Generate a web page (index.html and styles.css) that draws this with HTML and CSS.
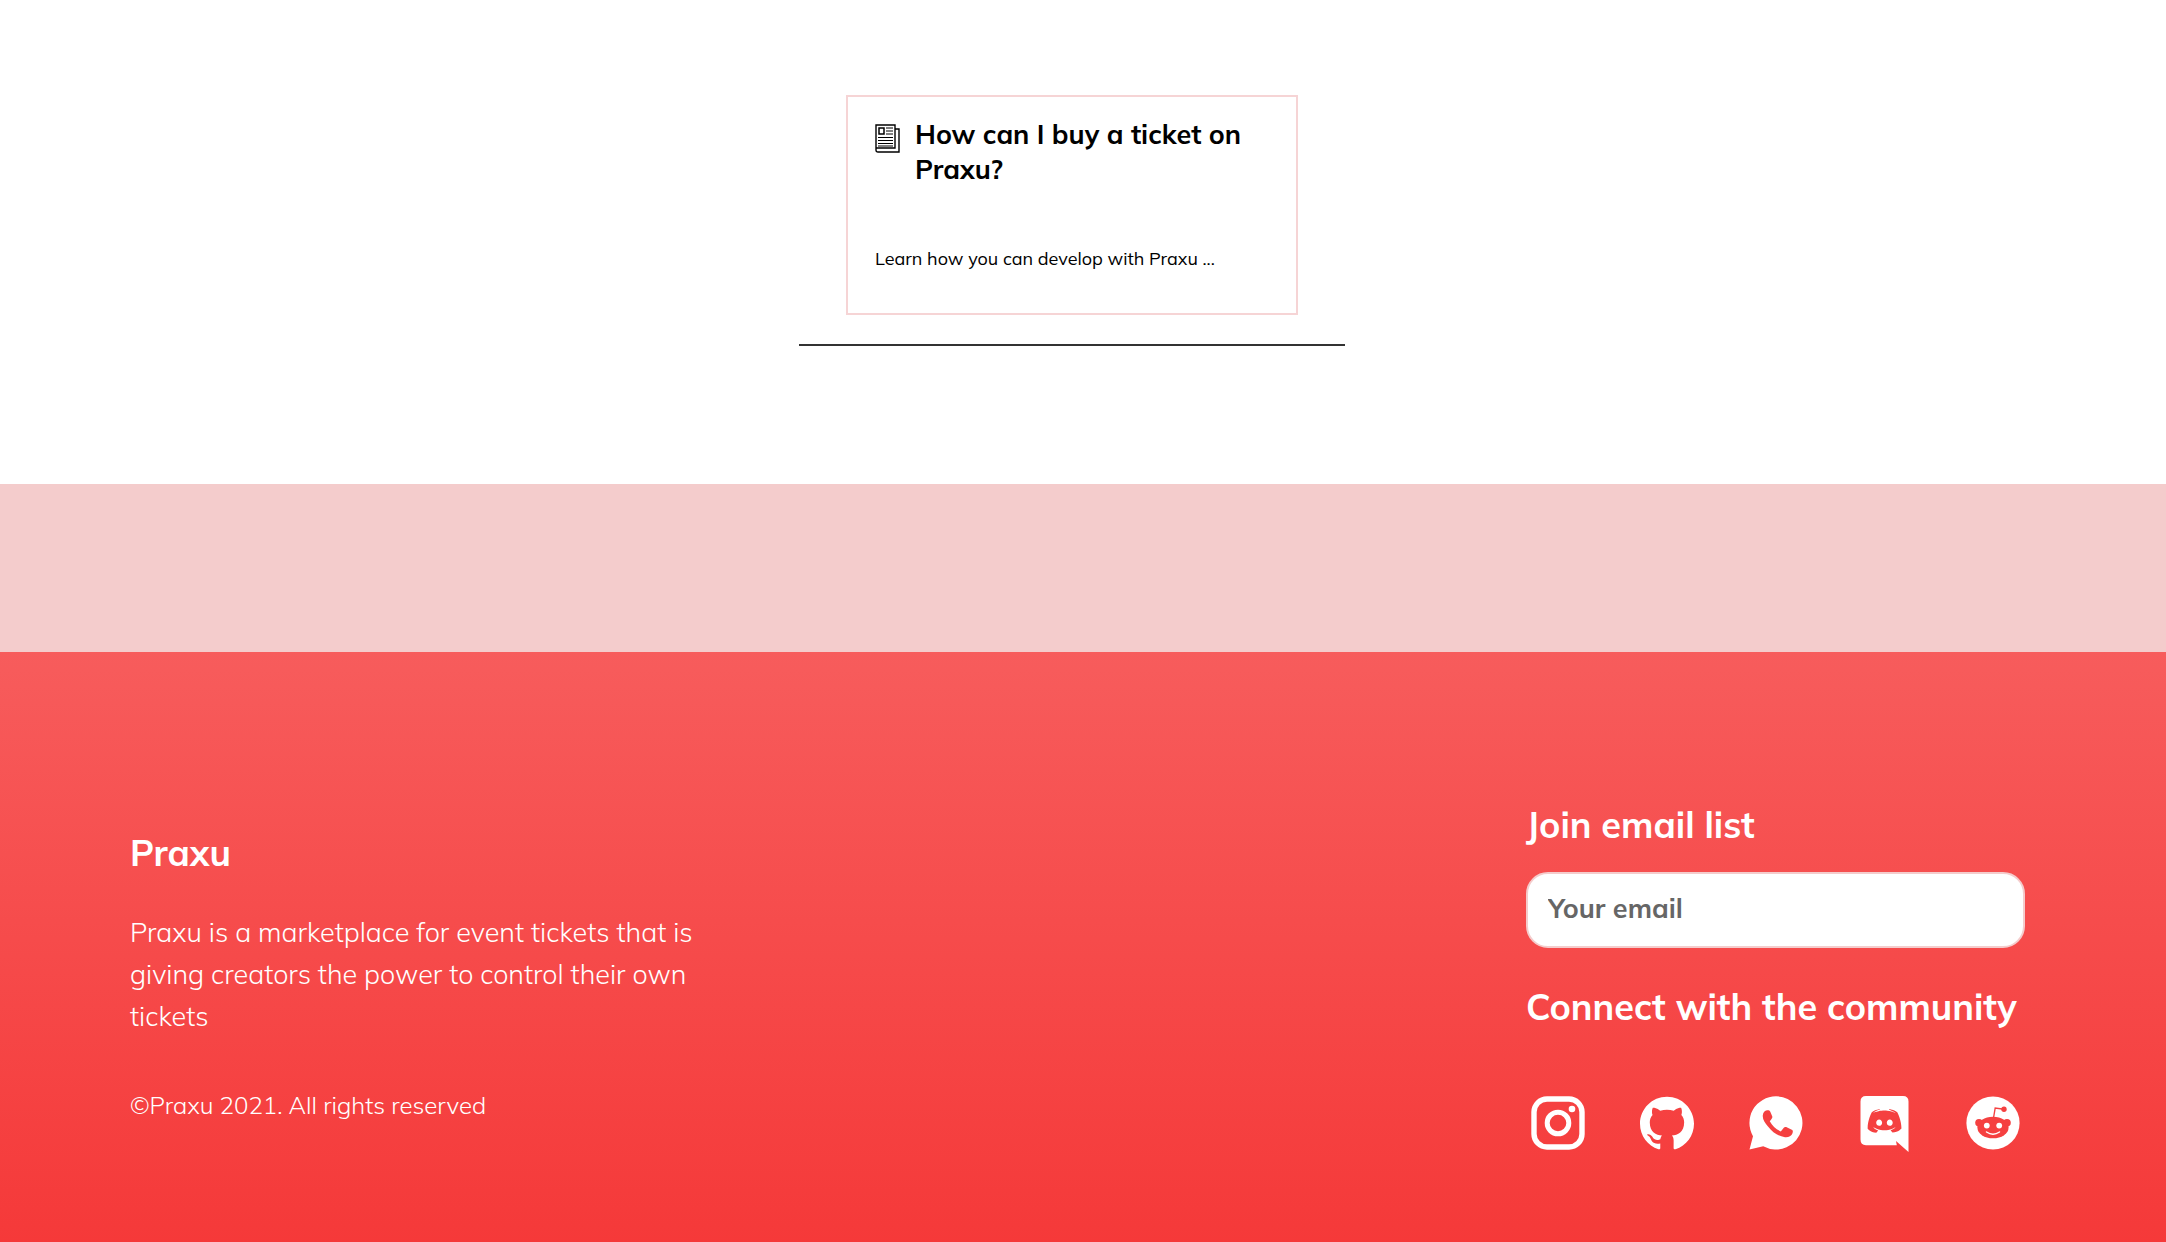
FILE: index.html
```html
<!DOCTYPE html>
<html lang="en">
<head>
<meta charset="utf-8">
<meta name="viewport" content="width=device-width, initial-scale=1">
<title>Praxu</title>
<link rel="stylesheet" href="styles.css">
</head>
<body>
<main class="faq">
  <section class="faq-group">
    <article class="card">
      <div class="card-head">
        <svg class="card-icon" viewBox="0 0 25 29" aria-hidden="true">
          <path d="M1 1h19v23H1zM20 5h4v23H3q-2 0-2-2v-3" fill="none" stroke="#000" stroke-width="1.4"/>
          <path d="M4 4h5v6H4z" fill="none" stroke="#000" stroke-width="1.5"/>
          <path d="M11 4h7M11 7h7M11 10h7M3 13.5h15M3 16.5h15M3 19.5h15M3 22h15" stroke="#000" stroke-width="1.1"/>
        </svg>
        <h2 class="card-title">How can I buy a ticket on Praxu?</h2>
      </div>
      <p class="card-text">Learn how you can develop with Praxu ...</p>
    </article>
    <hr class="rule">
  </section>
</main>
<div class="band"></div>
<footer class="footer">
  <section class="about">
    <h2 class="heading">Praxu</h2>
    <p class="about-text">Praxu is a marketplace for event tickets that is giving creators the power to control their own tickets</p>
    <p class="copyright">©Praxu 2021. All rights reserved</p>
  </section>
  <section class="contact">
    <label class="heading" for="email">Join email list</label>
    <input class="email" id="email" type="email" placeholder="Your email">
    <h2 class="heading">Connect with the community</h2>
    <nav class="social" aria-label="Social links">
      <a href="#" aria-label="Instagram"><svg class="icon" viewBox="0 0 54 54">
        <rect x="3" y="3" width="48" height="48" rx="13" fill="none" stroke="#fff" stroke-width="5.4"/>
        <circle cx="27" cy="27" r="10.8" fill="none" stroke="#fff" stroke-width="5"/>
        <circle cx="41" cy="13" r="3.3" fill="#fff"/></svg></a>
      <a href="#" aria-label="GitHub"><svg class="icon" viewBox="0 0 24 24">
        <path fill="#fff" d="M12 .297c-6.630 0-12 5.373-12 12 0 5.303 3.438 9.800 8.205 11.385.600.113.820-.258.820-.577 0-.285-.010-1.040-.015-2.040-3.338.724-4.042-1.610-4.042-1.610C4.422 18.070 3.633 17.700 3.633 17.700c-1.087-.744.084-.729.084-.729 1.205.084 1.838 1.236 1.838 1.236 1.070 1.835 2.809 1.305 3.495.998.108-.776.417-1.305.760-1.605-2.665-.300-5.466-1.332-5.466-5.930 0-1.310.465-2.380 1.235-3.220-.135-.303-.540-1.523.105-3.176 0 0 1.005-.322 3.300 1.230.960-.267 1.980-.399 3-.405 1.020.006 2.040.138 3 .405 2.280-1.552 3.285-1.230 3.285-1.230.645 1.653.240 2.873.120 3.176.765.840 1.230 1.910 1.230 3.220 0 4.610-2.805 5.625-5.475 5.920.420.360.810 1.096.810 2.220 0 1.606-.015 2.896-.015 3.286 0 .315.210.690.825.570C20.565 22.092 24 17.592 24 12.297c0-6.627-5.373-12-12-12"/></svg></a>
      <a href="#" aria-label="WhatsApp"><svg class="icon" viewBox="0 0 54 54">
        <path fill="#fff" d="M27 .3a26.600 26.600 0 1 1-12.800 50L.5 53.500 4 40.200A26.600 26.600 0 0 1 27 .3z"/>
        <path fill="#f54040" d="M18 14.300c1.500-.2 2.600.1 3.300 1.500l2 4.700c.2 1-.2 2-2.500 4.700 2.500 4.700 6 8 11 10.300l3-3.800c.7-.9 1.400-1 2.400-.6l5.600 2.700c1.300.7 1.200 2 .7 3.500-1 3-4.500 4.400-7.500 4-7-1-12.500-5-17-10.800-3-3.800-5.600-7-5.200-11.200.3-2.700 2-4.700 4.200-5z"/></svg></a>
      <a href="#" aria-label="Discord"><svg class="icon" viewBox="0 0 54 54">
        <path fill="#fff" d="M9 0h37q5.500 0 5.500 5.500V56L39 45l.8 4.200H9Q3.500 49.200 3.500 43.500v-38Q3.500 0 9 0z"/>
        <path fill="#f54040" fill-rule="evenodd" transform="translate(-.5 0) scale(2.330)" d="M14.104 5.683h-.03l-.202.2c2.073.6 3.076 1.537 3.076 1.537-1.336-.668-2.540-1.002-3.744-1.137-.87-.135-1.740-.064-2.475 0h-.2c-.47 0-1.470.2-2.810.735-.467.203-.735.336-.735.336s1.002-1.002 3.210-1.537l-.135-.135s-1.672-.064-3.477 1.270c0 0-1.805 3.144-1.805 7.020 0 0 1 1.740 3.743 1.806 0 0 .4-.533.805-1.002-1.540-.468-2.140-1.404-2.140-1.404s.134.066.335.2h.06c.03 0 .044.015.06.03v.006c.016.016.03.03.06.03.33.136.66.27.93.4.466.202 1.065.403 1.800.536.93.135 1.996.2 3.210 0 .6-.135 1.200-.267 1.800-.535.39-.2.87-.4 1.397-.737 0 0-.6.936-2.205 1.404.33.466.795 1 .795 1 2.744-.06 3.810-1.800 3.870-1.726 0-3.870-1.815-7.020-1.815-7.020-1.635-1.214-3.165-1.260-3.435-1.260zm.168 4.413c.703 0 1.270.6 1.270 1.335 0 .74-.57 1.340-1.270 1.340-.7 0-1.270-.6-1.270-1.334.002-.74.573-1.338 1.270-1.338zm-4.543 0c.7 0 1.266.6 1.266 1.335 0 .74-.57 1.340-1.270 1.340-.7 0-1.270-.6-1.270-1.334 0-.74.57-1.338 1.270-1.338z"/></svg></a>
      <a href="#" aria-label="Reddit"><svg class="icon" viewBox="0 0 54 54">
        <circle cx="27" cy="27" r="26.600" fill="#fff"/>
        <g fill="#f54040"><ellipse cx="27" cy="31.500" rx="15.600" ry="10.800"/><circle cx="13" cy="26.800" r="3.800"/><circle cx="41" cy="26.800" r="3.800"/><circle cx="38" cy="13.300" r="2.700"/></g>
        <path d="M27.500 22l1.700-10L38 13.300" fill="none" stroke="#f54040" stroke-width="1.400"/>
        <circle cx="20.800" cy="29.600" r="2.900" fill="#fff"/><circle cx="33.200" cy="29.600" r="2.900" fill="#fff"/>
        <path d="M20.500 36q6.500 4.600 13 0" fill="none" stroke="#fff" stroke-width="1.500" stroke-linecap="round"/></svg></a>
    </nav>
  </section>
</footer>
</body>
</html>
```
FILE: styles.css
```css
* { box-sizing: border-box; }
body {
  margin: 0;
  min-height: 100vh;
  display: flex;
  flex-direction: column;
  background: #fff;
  color: #000;
  font-family: Mulish, Muli, Lato, sans-serif;
}
h2, p { margin: 0; }
.faq {
  display: flex;
  justify-content: center;
  padding: 95px 22px 138px 0;
}
.faq-group { width: 100%; max-width: 546px; }
.card {
  margin: 0 47px;
  min-height: 220px;
  padding: 20px 27px;
  border: 2px solid #f6d4d5;
}
.card-head { display: flex; gap: 15px; }
.card-icon { width: 25px; height: 29px; margin-top: 7px; flex: none; }
.card-title { font-size: 27px; line-height: 35px; font-weight: 700; }
.card-text { margin-top: 60px; font-size: 18px; line-height: 24px; }
.rule {
  margin: 29px 0 0;
  border: 0;
  height: 2px;
  background: #333;
}
.band { height: 168px; background: #f4cccc; }
.footer {
  flex: 1;
  display: flex;
  justify-content: space-between;
  align-items: flex-start;
  gap: 48px;
  padding: 150px 6% 88px;
  background: linear-gradient(#f75c5c, #f53939);
  color: #fff;
}
.heading { display: block; font-size: 36px; line-height: 46px; font-weight: 700; }
.about { padding-top: 28px; max-width: 590px; font-weight: 300; }
.about-text { margin-top: 35px; font-size: 27px; line-height: 42px; }
.copyright { margin-top: 52px; font-size: 24px; line-height: 32px; }
.contact { width: 499px; margin-right: 11px; }
.email {
  display: block;
  width: 100%;
  height: 76px;
  margin: 24px 0 36px;
  padding: 0 20px 4px;
  border: 2px solid #f4cccc;
  border-radius: 22px;
  background: #fff;
  font: 700 27px/36px Mulish, Muli, Lato, sans-serif;
  color: #000;
}
.email::placeholder { color: #666; opacity: 1; }
.social {
  display: flex;
  justify-content: space-between;
  margin-top: 66px;
  padding: 0 5px;
}
.social a { display: block; }
.icon { display: block; width: 54px; height: 54px; overflow: visible; }
```
